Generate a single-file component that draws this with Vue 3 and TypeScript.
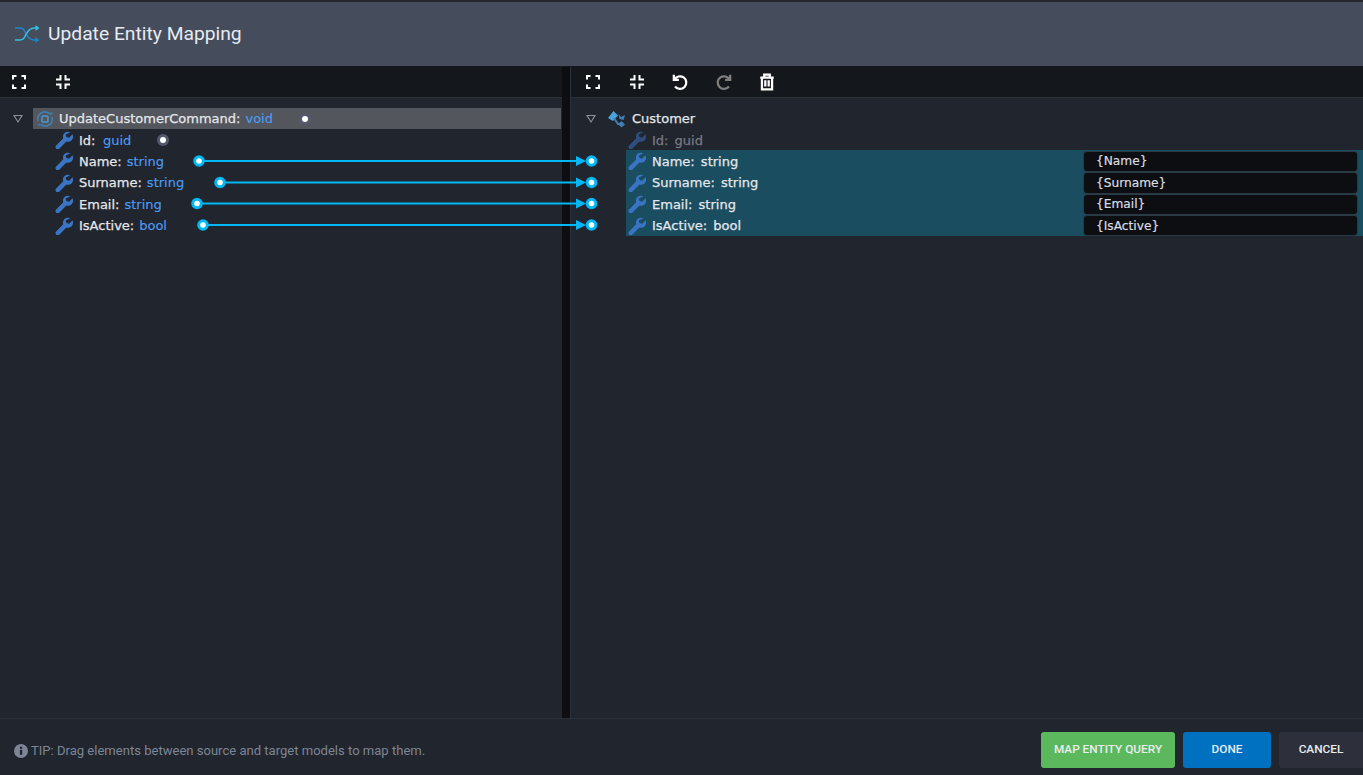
<script setup lang="ts">
interface Row { name: string; type: string; y: number; x: number; val: string }
const rows: Row[] = [
  { name: 'Name', type: 'string', y: 161, x: 199, val: '{Name}' },
  { name: 'Surname', type: 'string', y: 182.5, x: 220, val: '{Surname}' },
  { name: 'Email', type: 'string', y: 203.5, x: 197, val: '{Email}' },
  { name: 'IsActive', type: 'bool', y: 225, x: 203, val: '{IsActive}' },
]
const wrench = 'M20.600 1.600c-2.600-1.300-5.800-.9-8 1.200-1.900 1.900-2.400 4.600-1.600 7L1.500 19.300c-1.200 1.200-1.200 3 0 4.200s3 1.200 4.200 0l9.500-9.500c2.400.8 5.100.3 7-1.600 2.100-2.200 2.500-5.400 1.200-8l-4.600 4.600-3.600-.9-.9-3.600z'
</script>

<template>
  <div class="dialog">
    <header class="title">
      <svg class="shuffle" width="26" height="20" viewBox="0 0 26 20" fill="none">
        <path d="M1 4h5c3 0 4 1.500 6 5.500S17 16 20 16h3" stroke="#1b86c8" stroke-width="1.600" />
        <path d="M1 16h5c3 0 4-1.500 6-5.500S17 4 20 4h3" stroke="#35bfe0" stroke-width="1.600" />
        <path d="M21.500 1l4 3-4 3z" fill="#35bfe0" />
        <path d="M21.500 13l4 3-4 3z" fill="#1b86c8" />
      </svg>
      <span>Update Entity Mapping</span>
    </header>

    <main class="panes">
      <section class="pane left">
        <div class="toolbar">
          <svg class="tool" viewBox="0 0 14 14"><path d="M1 4.500V1h3.500M9.500 1H13v3.500M13 9.500V13H9.500M4.500 13H1V9.500" /></svg>
          <svg class="tool gap-a" viewBox="0 0 14 14"><path d="M4.500 0v4.500H0M14 4.500H9.500V0M9.500 14V9.500H14M0 9.500h4.500V14" /></svg>
        </div>
        <div class="tree">
          <div class="row root">
            <span class="caret"></span>
            <div class="root-label">
              <svg class="cmd" width="20" height="20" viewBox="0 0 20 20" fill="none">
                <path d="M3 12a7 7 0 0 1 11-7.500M17 8a7 7 0 0 1-11 7.500" stroke="#3f7fb5" stroke-width="1.600" />
                <path d="M2 16.500h5l-2.500-2zM18 3.500h-4.500l2.500 3z" fill="#3f7fb5" />
                <rect x="7" y="7" width="6" height="6" rx="1" stroke="#4a9ad0" stroke-width="1.500" />
              </svg>
              <span class="lbl">UpdateCustomerCommand:</span><span class="typ">void</span>
              <span class="dot grey root-dot"></span>
            </div>
          </div>
          <div class="row child">
            <svg class="wrench" viewBox="0 0 24 24"><path :d="wrench" /></svg>
            <span class="lbl">Id:</span><span class="typ wide">guid</span>
            <span class="dot grey id-dot"></span>
          </div>
          <div v-for="r in rows" :key="r.name" class="row child">
            <svg class="wrench" viewBox="0 0 24 24"><path :d="wrench" /></svg>
            <span class="lbl">{{ r.name }}:</span><span class="typ">{{ r.type }}</span>
          </div>
        </div>
      </section>

      <div class="divider"></div>

      <section class="pane right">
        <div class="toolbar rt">
          <svg class="tool" viewBox="0 0 14 14"><path d="M1 4.500V1h3.500M9.500 1H13v3.500M13 9.500V13H9.500M4.500 13H1V9.500" /></svg>
          <svg class="tool gap-b" viewBox="0 0 14 14"><path d="M4.500 0v4.500H0M14 4.500H9.500V0M9.500 14V9.500H14M0 9.500h4.500V14" /></svg>
          <svg class="act gap-c" viewBox="0 0 16 16"><path d="M2.500 1.500v4.500H7M3 6a5.600 5.600 0 1 1 .6 6" /></svg>
          <svg class="act off gap-d" viewBox="0 0 16 16"><path d="M13.500 1.500v4.500H9M13 6a5.600 5.600 0 1 0-.6 6" /></svg>
          <svg class="act gap-e" viewBox="0 0 16 16"><path d="M2 4h12M5.500 4V1.500h5V4M3.500 4v10.500h9V4M6.500 6.500v5.500M9.500 6.500v5.500" /></svg>
        </div>
        <div class="tree">
          <div class="row root rroot">
            <span class="caret"></span>
            <svg class="ent" width="18" height="18" viewBox="0 0 18 18" fill="none">
              <path d="M0 8l5.500-7L10 5.500 5 11z" fill="#4ba3dc" />
              <path d="M6 8l4 6h3" stroke="#3f7fb5" stroke-width="2" />
              <path d="M10.500 4l2.500 3 4-2-1.500 5-4-1z" fill="#3f7fb5" />
              <path d="M10 14l3.500-3 3.500 3.500-3.500 3z" fill="#3f7fb5" />
            </svg>
            <span class="lbl">Customer</span>
          </div>
          <div class="row target muted">
            <svg class="wrench" viewBox="0 0 24 24"><path :d="wrench" /></svg>
            <span class="lbl">Id: guid</span>
          </div>
          <div class="mapped">
            <div v-for="r in rows" :key="r.name" class="row target">
              <svg class="wrench" viewBox="0 0 24 24"><path :d="wrench" /></svg>
              <span class="lbl">{{ r.name }}: {{ r.type }}</span>
              <div class="value">{{ r.val }}</div>
            </div>
          </div>
        </div>
      </section>

      <svg class="links" width="1363" height="240" viewBox="0 0 1363 240">
        <g v-for="r in rows" :key="r.name">
          <line :x1="r.x" :y1="r.y" x2="578" :y2="r.y" stroke="#00b8f5" stroke-width="2" />
          <path :d="`M576 ${r.y - 5}l10 5-10 5z`" fill="#00b8f5" />
          <circle :cx="r.x" :cy="r.y" r="5.800" fill="#00b8f5" />
          <circle :cx="r.x" :cy="r.y" r="2.800" fill="#fff" />
          <circle cx="591.500" :cy="r.y" r="5.800" fill="#00b8f5" />
          <circle cx="591.500" :cy="r.y" r="2.800" fill="#fff" />
        </g>
      </svg>
    </main>

    <footer class="foot">
      <div class="tip">
        <svg width="14" height="14" viewBox="0 0 14 14">
          <circle cx="7" cy="7" r="7" fill="#7d8597" />
          <rect x="5.900" y="5.800" width="2.300" height="5" fill="#21252d" />
          <rect x="5.900" y="2.800" width="2.300" height="2" fill="#21252d" />
        </svg>
        <span>TIP: Drag elements between source and target models to map them.</span>
      </div>
      <div class="btns">
        <button class="btn green">MAP ENTITY QUERY</button>
        <button class="btn blue">DONE</button>
        <button class="btn dark">CANCEL</button>
      </div>
    </footer>
  </div>
</template>

<style scoped>
.dialog {
  width: 1363px;
  height: 775px;
  display: flex;
  flex-direction: column;
  background: #21252d;
  overflow: hidden;
  border-top: 2px solid #24272e;
  box-sizing: border-box;
}
.title {
  height: 65px;
  flex: none;
  display: flex;
  align-items: center;
  gap: 8px;
  padding: 0 0 1px 14px;
  background: #454c5c;
  border-bottom: 1px solid #14171c;
  box-sizing: border-box;
  color: #e6ebf2;
  font: 19.250px Roboto, "Noto Sans", sans-serif;
}
.panes {
  position: relative;
  flex: 1;
  display: flex;
  min-height: 0;
}
.pane { display: flex; flex-direction: column; }
.left { width: 562px; flex: none; }
.right { flex: 1; min-width: 0; }
.divider {
  width: 9px;
  flex: none;
  background: #0c0e11;
  border-right: 1px solid #2c313b;
  box-sizing: border-box;
}
.toolbar {
  height: 31px;
  flex: none;
  display: flex;
  align-items: center;
  padding: 0 0 1px 12px;
  background: #14171c;
  border-bottom: 1px solid #2a2f38;
  box-sizing: border-box;
}
.toolbar.rt { padding-left: 15px; }
.tool { width: 14px; height: 14px; fill: none; stroke: #fff; stroke-width: 2; flex: none; }
.act { width: 18px; height: 18px; fill: none; stroke: #fff; stroke-width: 2; flex: none; }
.act.off { stroke: #7f7f7f; }
.gap-a { margin-left: 30px; }
.gap-b { margin-left: 30px; }
.gap-c { margin-left: 27px; }
.gap-d { margin-left: 26px; }
.gap-e { margin-left: 25px; }
.tree {
  padding-top: 10px;
  font: 13px "DejaVu Sans", sans-serif;
  color: #e4e7ec;
}
.lbl { -webkit-text-stroke: 0.25px currentColor; }
.target .lbl { word-spacing: 2px; }
.row {
  display: flex;
  align-items: center;
  height: 21.400px;
  white-space: nowrap;
}
.root { padding-left: 13px; }
.caret {
  width: 0;
  height: 0;
  position: relative;
  flex: none;
  border-left: 5.500px solid transparent;
  border-right: 5.500px solid transparent;
  border-top: 8px solid #8a8f99;
}
.caret::after {
  content: "";
  position: absolute;
  left: -3.500px;
  top: -7px;
  border-left: 3.500px solid transparent;
  border-right: 3.500px solid transparent;
  border-top: 5px solid #21252d;
}
.root-label {
  position: relative;
  flex: 1;
  height: 100%;
  margin-left: 10px;
  margin-right: 1px;
  display: flex;
  align-items: center;
  background: #53565c;
  padding-left: 2px;
}
.cmd { flex: none; margin-right: 4px; }
.typ { color: #4b9cf5; margin-left: 5px; -webkit-text-stroke: 0.15px currentColor; }
.typ.wide { margin-left: 7.500px; }
.child { padding-left: 55px; }
.wrench { width: 18px; height: 18px; fill: #3a74c4; flex: none; margin-right: 6px; }
.dot {
  width: 6px;
  height: 6px;
  background: #fff;
  border-radius: 50%;
  box-shadow: 0 0 0 3px #55586a;
  flex: none;
}
.root-dot { position: absolute; left: 269px; top: 8px; }
.id-dot { margin-left: 29px; }
.rroot { padding-left: 15px; }
.ent { margin-left: 12px; margin-right: 6px; flex: none; }
.target { padding-left: 57px; }
.muted .lbl { color: #757a84; }
.muted .wrench { fill: #2e4f7e; }
.mapped {
  background: #1a4d60;
  margin: -1px 0 0 55px;
  padding-top: 1px;
  height: 86px;
  box-sizing: border-box;
}
.mapped .target { padding-left: 2px; position: relative; }
.value {
  position: absolute;
  left: 458px;
  right: 6px;
  top: 1px;
  bottom: 1px;
  background: #0c0e11;
  border-radius: 3px;
  box-shadow: 0 0 0 1px #2a3a45;
  padding-left: 12px;
  display: flex;
  align-items: center;
  color: #d9dce1;
  font-size: 12.200px;
  -webkit-text-stroke: 0.2px currentColor;
}
.links {
  position: absolute;
  left: 0;
  top: -67px;
  pointer-events: none;
}
.foot {
  height: 57px;
  flex: none;
  border-top: 1px solid #2b3039;
  display: flex;
  align-items: flex-start;
  justify-content: space-between;
  box-sizing: border-box;
}
.tip {
  display: flex;
  align-items: center;
  gap: 3px;
  margin: 24px 0 0 14px;
  color: #7d8597;
  font: 13.050px Roboto, "Noto Sans", sans-serif;
}
.btns { display: flex; gap: 8px; margin-top: 13px; }
.btn {
  height: 36px;
  border: 0;
  border-radius: 3px;
  color: #e9edf2;
  font: 500 11.800px Roboto, "Noto Sans", sans-serif;
  padding: 0 0 3px;
}
.green { width: 134px; background: #5cb85c; }
.blue { width: 88px; background: #0070c0; }
.dark { width: 84px; background: #2d303b; border-radius: 3px 0 0 3px; }
</style>
